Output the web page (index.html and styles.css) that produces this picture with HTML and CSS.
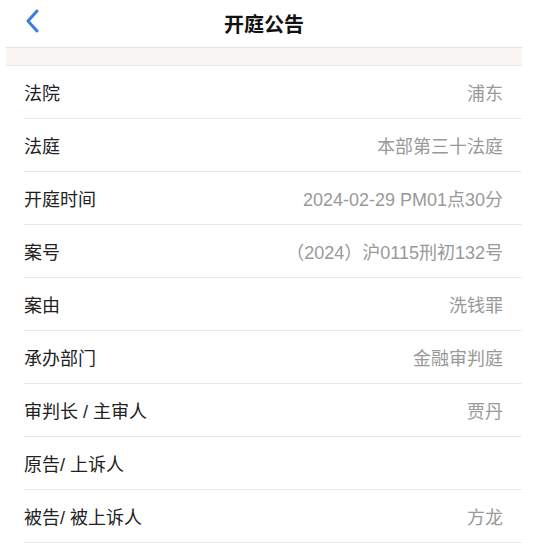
FILE: index.html
```html
<!DOCTYPE html>
<html lang="zh-CN">

<head>
    <meta charset="UTF-8">
    <meta name="viewport" content="width=device-width, initial-scale=1.0">
    <title>开庭公告</title>
    <link rel="stylesheet" href="styles.css">
</head>

<body>
    <div class="page">
        <header class="nav-bar">
            <a class="back-button" href="#">
                <svg width="14" height="24" viewBox="0 0 14 24">
                    <path d="M12 2 L3 12 L12 22" fill="none" stroke="#3b7ddd" stroke-width="3" stroke-linecap="round" stroke-linejoin="round"/>
                </svg>
            </a>
            <h1>开庭公告</h1>
        </header>
        <div class="spacer"></div>

        <div class="detail-list">
            <div class="detail-row">
                <span class="label">法院</span>
                <span class="value">浦东</span>
            </div>
            <div class="detail-row">
                <span class="label">法庭</span>
                <span class="value">本部第三十法庭</span>
            </div>
            <div class="detail-row">
                <span class="label">开庭时间</span>
                <span class="value">2024-02-29 PM01点30分</span>
            </div>
            <div class="detail-row">
                <span class="label">案号</span>
                <span class="value">（2024）沪0115刑初132号</span>
            </div>
            <div class="detail-row">
                <span class="label">案由</span>
                <span class="value">洗钱罪</span>
            </div>
            <div class="detail-row">
                <span class="label">承办部门</span>
                <span class="value">金融审判庭</span>
            </div>
            <div class="detail-row">
                <span class="label">审判长 / 主审人</span>
                <span class="value">贾丹</span>
            </div>
            <div class="detail-row">
                <span class="label">原告/ 上诉人</span>
                <span class="value"></span>
            </div>
            <div class="detail-row">
                <span class="label">被告/ 被上诉人</span>
                <span class="value">方龙</span>
            </div>
        </div>
    </div>
</body>

</html>
```

FILE: styles.css
```css
body {
    margin: 0;
    padding: 0;
    background-color: #fff;
    font-family: "Liberation Sans", "Noto Sans CJK SC", sans-serif;
}

.page {
    width: 516px;
    margin-left: 6px;
}

.nav-bar {
    position: relative;
    height: 47px;
    display: flex;
    align-items: center;
    justify-content: center;
}

.nav-bar h1 {
    margin: 0;
    font-size: 20px;
    font-weight: bold;
    color: #111;
}

.back-button {
    position: absolute;
    left: 19px;
    top: 9px;
    display: block;
}

.spacer {
    height: 17px;
    background-color: #f8f5f2;
    border-top: 1px solid #e6e4e2;
    border-bottom: 1px solid #ebe9e7;
}

.detail-list {
    margin-left: 18px;
}

.detail-row {
    display: flex;
    justify-content: space-between;
    align-items: center;
    height: 52px;
    border-bottom: 1px solid #e8e8e8;
    font-size: 18px;
}

.label {
    color: #222;
}

.value {
    color: #999;
    margin-right: 19px;
}
```
